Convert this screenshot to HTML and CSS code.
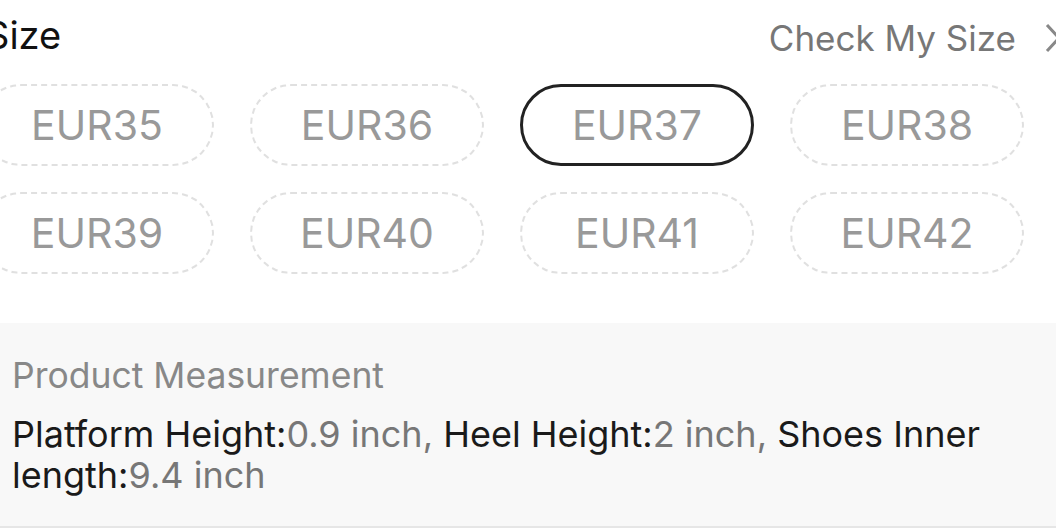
FILE: index.html
```html
<!DOCTYPE html>
<html lang="en">
<head>
  <meta charset="utf-8" />
  <title>Size</title>
  <link rel="stylesheet" href="styles.css">
</head>
<body>
  <div class="size-section">
    <div class="size-header">
      <h2 class="size-title">Size</h2>
      <a class="check-size" href="#">Check My Size
        <svg class="chevron" width="18" height="30" viewBox="0 0 18 30">
          <path d="M3 2 L15 15 L3 28" fill="none" stroke="#888" stroke-width="3"/>
        </svg>
      </a>
    </div>

    <div class="size-grid">
      <button type="button" class="size-btn">EUR35</button>
      <button type="button" class="size-btn">EUR36</button>
      <button type="button" class="size-btn selected">EUR37</button>
      <button type="button" class="size-btn">EUR38</button>
      <button type="button" class="size-btn">EUR39</button>
      <button type="button" class="size-btn">EUR40</button>
      <button type="button" class="size-btn">EUR41</button>
      <button type="button" class="size-btn">EUR42</button>
    </div>
  </div>

  <div id="measure-panel">
    <p class="measure-title">Product Measurement</p>
    <p class="measure-text">
      <span class="label">Platform Height:</span><span class="value">0.9 inch,</span>
      <span class="label">Heel Height:</span><span class="value">2 inch,</span>
      <span class="label">Shoes Inner length:</span><span class="value">9.4 inch</span>
    </p>
  </div>
</body>
</html>
```

FILE: styles.css
```css
body {
  margin: 0;
  font-family: Inter, "Noto Sans", sans-serif;
  background-color: #fff;
  color: #222;
  overflow: hidden;
}
.size-section {
  margin-left: -20px;
  margin-right: -6px;
}
.size-header {
  display: flex;
  justify-content: space-between;
  align-items: center;
  height: 70px;
}
.size-title {
  margin: 0;
  padding-left: 5px;
  font-size: 38px;
  font-weight: 400;
  color: #111;
}
.check-size {
  display: flex;
  align-items: center;
  gap: 28px;
  color: #777;
  font-size: 35px;
  text-decoration: none;
  margin-top: 6px;
}
.size-grid {
  display: grid;
  grid-template-columns: repeat(4, 234px);
  column-gap: 36px;
  row-gap: 26px;
  margin-top: 14px;
}
.size-btn {
  height: 82px;
  border: 2px dashed #e0e0e0;
  border-radius: 41px;
  background: #fff;
  font-family: inherit;
  font-size: 41px;
  color: #999;
  padding: 0;
}
.size-btn.selected {
  border: 3px solid #222;
}
#measure-panel {
  margin-top: 49px;
  background-color: #f8f8f8;
  padding: 32px 12px 30px;
  border-bottom: 2px solid #e6e6e6;
}
.measure-title {
  margin: 0 0 18px;
  font-size: 35.5px;
  line-height: 41px;
  color: #888;
}
.measure-text {
  margin: 0;
  font-size: 36px;
  line-height: 41px;
  color: #1a1a1a;
}
.measure-text .value {
  color: #777;
}
```
